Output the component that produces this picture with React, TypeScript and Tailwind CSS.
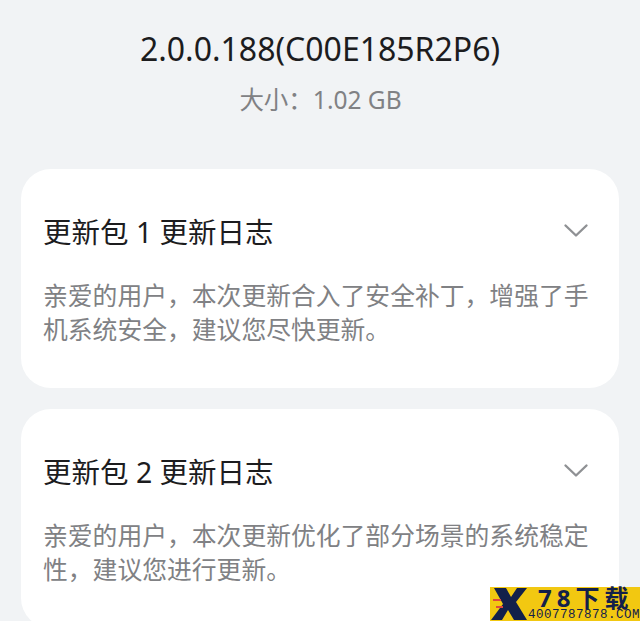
const font = { fontFamily: '"Noto Sans", "Noto Sans CJK SC", sans-serif' };

function Chevron() {
  return (
    <svg width="26" height="16" viewBox="0 0 26 16" fill="none" className="mt-[10px] shrink-0">
      <path d="M2.5 2.5 L13 12.5 L23.5 2.5" stroke="#8f9194" strokeWidth="2.4" strokeLinecap="round" strokeLinejoin="round" />
    </svg>
  );
}

function Card({ title, lines }: { title: string; lines: string[] }) {
  return (
    <div className="mx-[21px] h-[219px] shrink-0 rounded-[30px] bg-white pl-[22px] pr-[30px] pt-[44px]">
      <div className="flex items-start justify-between">
        <div className="text-[28.5px] leading-[38px] text-[#1c1c1e]">{title}</div>
        <Chevron />
      </div>
      <div className="mt-[27px] whitespace-nowrap text-[24.8px] leading-[34px] text-[#808184]">
        {lines.map((line) => (
          <div key={line}>{line}</div>
        ))}
      </div>
    </div>
  );
}

function Watermark() {
  return (
    <div className="absolute bottom-0 right-0 flex h-[34px] w-[150px] bg-[#f2c811] text-[#13204a]">
      <svg width="38" height="34" viewBox="0 0 38 34" className="shrink-0">
        <path d="M4 1 H16 L21 10 L27 1 H37 L26 15 L37 33 H24 L18 23 L12 33 H1 L13 17 Z" fill="#13204a" />
        <path d="M3 13 H11 M6 20 H13" stroke="#e0483c" strokeWidth="2" />
      </svg>
      <div className="flex min-w-0 flex-1 flex-col">
        <div className="h-[22px] whitespace-nowrap pl-[10px] text-[24px] font-bold leading-[21px] tracking-[5px]">78下载</div>
        <div className="h-[12px] whitespace-nowrap text-[12.5px] leading-[12px] tracking-[0.5px]" style={{ fontFamily: '"Liberation Mono", monospace' }}>4007787878.COM</div>
      </div>
    </div>
  );
}

export default function App() {
  return (
    <div className="relative h-[621px] w-[640px] overflow-hidden bg-[#f1f3f5]" style={font}>
      <div className="flex h-full flex-col">
        <div className="flex h-[169px] shrink-0 flex-col items-center pt-[26px]">
          <div className="text-[32px] leading-[46px] text-[#1c1c1e]">2.0.0.188(C00E185R2P6)</div>
          <div className="mt-[10px] pl-[1px] text-[24.5px] leading-[36px] text-[#808184]">大小：1.02 GB</div>
        </div>
        <div className="flex flex-col gap-[21px]">
          <Card title="更新包 1 更新日志" lines={["亲爱的用户，本次更新合入了安全补丁，增强了手", "机系统安全，建议您尽快更新。"]} />
          <Card title="更新包 2 更新日志" lines={["亲爱的用户，本次更新优化了部分场景的系统稳定", "性，建议您进行更新。"]} />
        </div>
      </div>
      <Watermark />
    </div>
  );
}
